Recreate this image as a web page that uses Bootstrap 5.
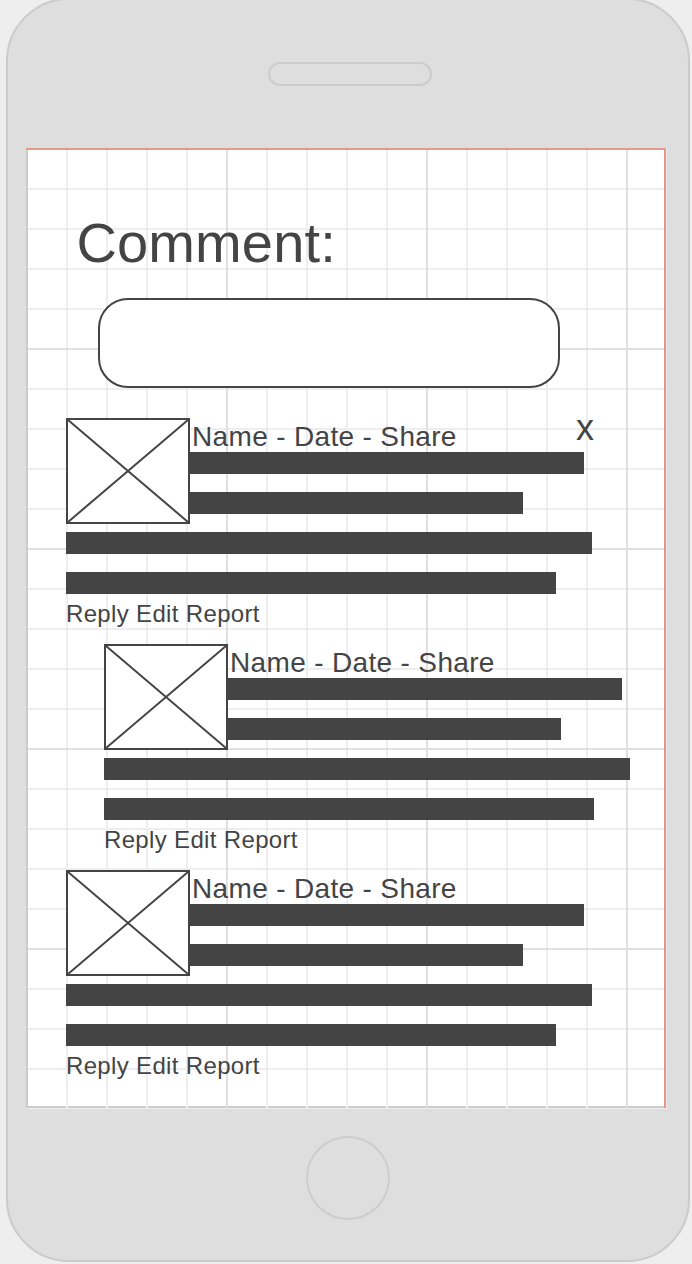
<!DOCTYPE html>
<html lang="en">
<head>
<meta charset="utf-8">
<meta name="viewport" content="width=device-width, initial-scale=1">
<title>Comments wireframe</title>
<link href="https://cdn.jsdelivr.net/npm/bootstrap@5.3.0/dist/css/bootstrap.min.css" rel="stylesheet">
<style>
  :root { --ink: #444; --edge: #cbcbcb; }
  body { background: #eee; color: var(--ink); font-family: "Liberation Sans", Arial, sans-serif; letter-spacing: .34px; height: 1264px; }
  .phone { width: 684px; height: 1264px; margin: -2px 0 0 6px; background: #dedede; border: 2px solid var(--edge); border-radius: 63px; }
  .speaker { width: 164px; height: 24px; margin: 62px 0 62px 260px; border: 2px solid #ccc; border-radius: 12px; }
  .home-button { width: 84px; height: 84px; margin: 27px 0 0 298px; border: 2px solid #ccc; }
  .screen {
    width: 641px; height: 961px; margin-left: 18px; padding: 2px 3px 3px 2px;
    background:
      linear-gradient(#e69a8c, #e69a8c) 0 0 / 640px 2px no-repeat,
      linear-gradient(rgba(220, 105, 85, .7), rgba(220, 105, 85, .7)) 638px 0 / 2px 960px no-repeat,
      linear-gradient(var(--edge), var(--edge)) 0 0 / 2px 960px no-repeat,
      repeating-linear-gradient(90deg, #e0e0e0 0 2px, transparent 2px 200px) 200px 0 / 438px 961px no-repeat,
      repeating-linear-gradient(#e0e0e0 0 2px, transparent 2px 200px) 2px 200px / 638px 758px no-repeat,
      repeating-linear-gradient(90deg, #eee 0 2px, transparent 2px 40px) 40px 0 / 598px 961px no-repeat,
      repeating-linear-gradient(#eee 0 2px, transparent 2px 40px) 2px 40px / 638px 918px no-repeat,
      linear-gradient(var(--edge), var(--edge)) 0 958px / 638px 2px no-repeat,
      linear-gradient(#f0f0f0, #f0f0f0) 0 960px / 641px 1px no-repeat,
      linear-gradient(#ececec, #ececec) 640px 0 / 1px 961px no-repeat,
      #fff;
  }
  .page-title { font-size: 56px; line-height: 64px; font-weight: 400; letter-spacing: .15px; padding: 61px 0 0 48.4px; margin-bottom: 23px; }
  .comment-box { display: block; width: 462px; height: 90px; margin: 0 0 30px 70px; border: 2px solid var(--ink); border-radius: 30px; background: #fff; outline: none; resize: none; }
  .comment { height: 226px; margin-left: 38px; }
  .comment.reply { margin-left: 76px; }
  .comment-head { height: 106px; margin-bottom: 8px; }
  .avatar { width: 124px; height: 106px; background: #fff; border: 2px solid var(--ink); }
  .byline { font-size: 28px; line-height: 37px; height: 34px; padding-left: 2px; }
  .text-bar { height: 22px; background: var(--ink); margin-bottom: 18px; }
  .w-a { width: 394px; } .w-b { width: 333px; } .w-c { width: 526px; } .w-d { width: 490px; }
  .actions { font-size: 24px; line-height: 40px; margin-top: -18px; }
  .dismiss { font-size: 36px; line-height: 20px; left: 510px; top: 0; }
</style>
</head>
<body class="overflow-hidden">
<div class="phone overflow-hidden">
  <div class="speaker"></div>
  <main class="screen">
    <h1 class="page-title">Comment:</h1>
    <textarea class="comment-box" aria-label="Comment"></textarea>

    <article class="comment position-relative">
      <div class="comment-head d-flex">
        <svg class="avatar flex-shrink-0" viewBox="0 0 120 102"><path d="M0 0L120 102M120 0L0 102" stroke="#444" stroke-width="2"/></svg>
        <div>
          <div class="byline text-nowrap">Name - Date - Share</div>
          <div class="text-bar w-a"></div>
          <div class="text-bar w-b"></div>
        </div>
      </div>
      <div class="text-bar w-c"></div>
      <div class="text-bar w-d"></div>
      <div class="actions">Reply Edit Report</div>
      <div class="dismiss position-absolute">x</div>
    </article>

    <article class="comment reply">
      <div class="comment-head d-flex">
        <svg class="avatar flex-shrink-0" viewBox="0 0 120 102"><path d="M0 0L120 102M120 0L0 102" stroke="#444" stroke-width="2"/></svg>
        <div>
          <div class="byline text-nowrap">Name - Date - Share</div>
          <div class="text-bar w-a"></div>
          <div class="text-bar w-b"></div>
        </div>
      </div>
      <div class="text-bar w-c"></div>
      <div class="text-bar w-d"></div>
      <div class="actions">Reply Edit Report</div>
    </article>

    <article class="comment">
      <div class="comment-head d-flex">
        <svg class="avatar flex-shrink-0" viewBox="0 0 120 102"><path d="M0 0L120 102M120 0L0 102" stroke="#444" stroke-width="2"/></svg>
        <div>
          <div class="byline text-nowrap">Name - Date - Share</div>
          <div class="text-bar w-a"></div>
          <div class="text-bar w-b"></div>
        </div>
      </div>
      <div class="text-bar w-c"></div>
      <div class="text-bar w-d"></div>
      <div class="actions">Reply Edit Report</div>
    </article>
  </main>
  <div class="home-button rounded-circle"></div>
</div>
<script src="https://cdn.jsdelivr.net/npm/bootstrap@5.3.0/dist/js/bootstrap.bundle.min.js"></script>
</body>
</html>
